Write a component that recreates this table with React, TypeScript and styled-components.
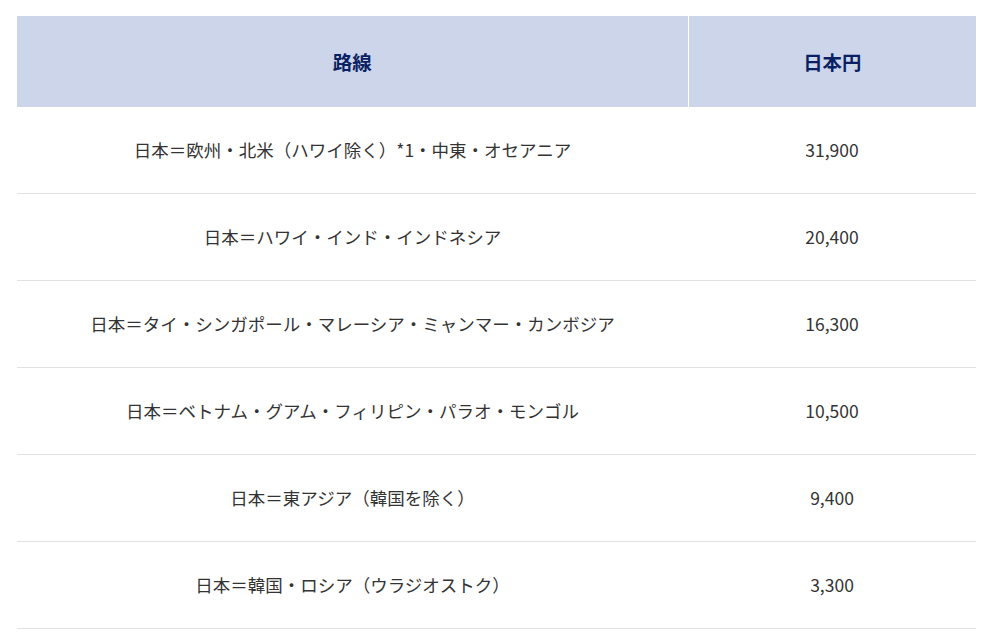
import React from "react";
import { styled, createGlobalStyle } from "styled-components";

const GlobalStyle = createGlobalStyle`
  html, body {
    margin: 0;
    padding: 0;
    background: #ffffff;
  }
  body {
    font-family: "Noto Sans CJK JP", "Noto Sans", sans-serif;
    color: #333333;
  }
`;

const rows = [
  { route: "日本＝欧州・北米（ハワイ除く）*1・中東・オセアニア", yen: "31,900" },
  { route: "日本＝ハワイ・インド・インドネシア", yen: "20,400" },
  { route: "日本＝タイ・シンガポール・マレーシア・ミャンマー・カンボジア", yen: "16,300" },
  { route: "日本＝ベトナム・グアム・フィリピン・パラオ・モンゴル", yen: "10,500" },
  { route: "日本＝東アジア（韓国を除く）", yen: "9,400" },
  { route: "日本＝韓国・ロシア（ウラジオストク）", yen: "3,300" },
];

export default function App() {
  return (
    <>
      <GlobalStyle />
      <Wrapper>
        <FareTable>
          <colgroup>
            <col style={{ width: 671 }} />
            <col style={{ width: 288 }} />
          </colgroup>
          <thead>
            <tr>
              <HeadCell>路線</HeadCell>
              <HeadCell $divider>日本円</HeadCell>
            </tr>
          </thead>
          <tbody>
            {rows.map((r) => (
              <Row key={r.route}>
                <Cell>{r.route}</Cell>
                <Cell>{r.yen}</Cell>
              </Row>
            ))}
          </tbody>
        </FareTable>
      </Wrapper>
    </>
  );
}

const Wrapper = styled.div`
  padding: 16px 21px 0 17px;
`;

const FareTable = styled.table`
  width: 959px;
  border-collapse: collapse;
  table-layout: fixed;
`;

const HeadCell = styled.th<{ $divider?: boolean }>`
  height: 91px;
  padding: 0;
  background: #ccd5ea;
  color: #0b1f63;
  font-size: 19.4px;
  font-weight: 700;
  text-align: center;
  vertical-align: middle;
  border-left: ${(p) => (p.$divider ? "1px solid #ffffff" : "none")};
`;

const Row = styled.tr`
  border-bottom: 1px solid #e2e2e2;
`;

const Cell = styled.td`
  height: 86px;
  padding: 0;
  font-size: 17.5px;
  line-height: 26px;
  color: #333333;
  text-align: center;
  vertical-align: middle;
`;
